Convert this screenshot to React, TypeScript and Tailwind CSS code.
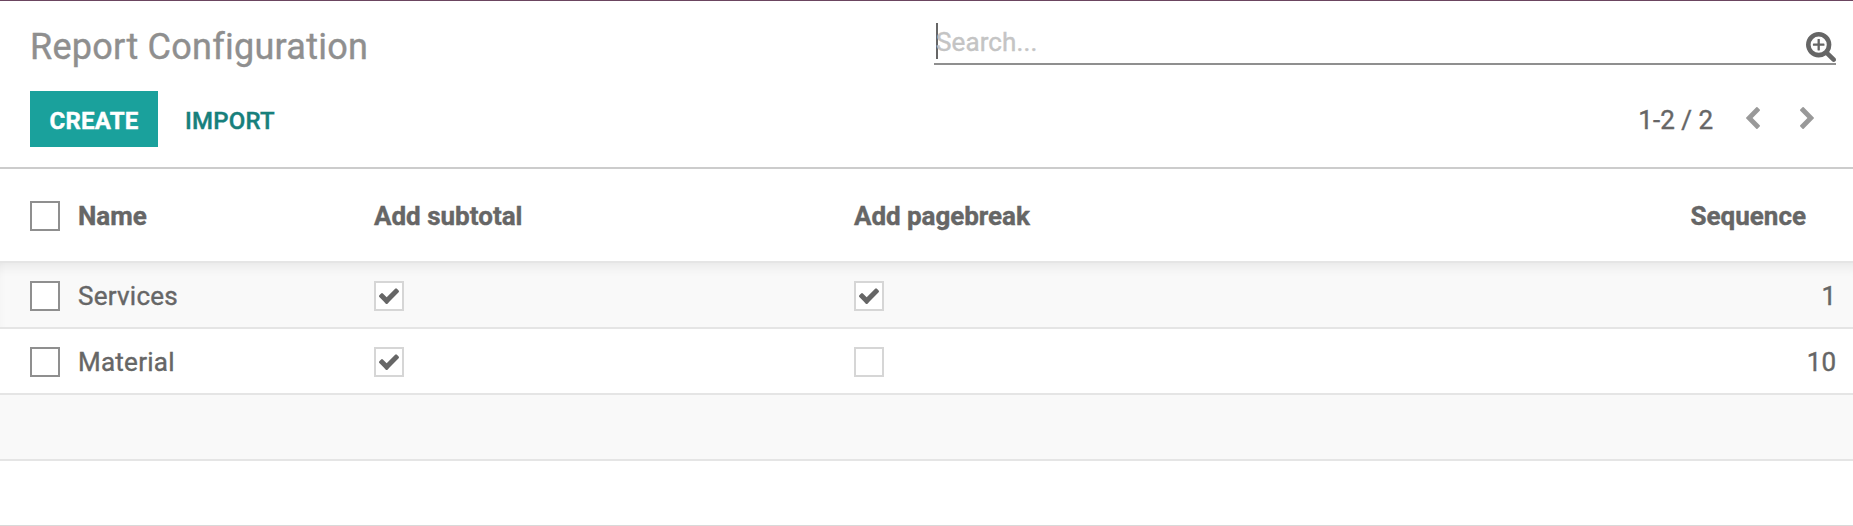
import React from "react";

function CheckGlyph() {
  return (
    <svg width="20" height="16" viewBox="121 314 1550 1208" preserveAspectRatio="none" fill="#666666">
      <path d="M1671 566q0 40-28 68l-724 724-136 136q-28 28-68 28t-68-28l-136-136-362-362q-28-28-28-68t28-68l136-136q28-28 68-28t68 28l294 295 656-657q28-28 68-28t68 28l136 136q28 28 28 68z" />
    </svg>
  );
}

function SearchPlusGlyph() {
  return (
    <svg className="mb-px" width="30" height="30" viewBox="64 128 1664 1664" fill="#666666">
      <path d="M1088 800v64q0 13-9.5 22.5t-22.5 9.5h-224v224q0 13-9.5 22.5t-22.5 9.5h-64q-13 0-22.5-9.5t-9.5-22.5v-224h-224q-13 0-22.5-9.5t-9.5-22.5v-64q0-13 9.5-22.5t22.5-9.5h224v-224q0-13 9.5-22.5t22.5-9.5h64q13 0 22.5 9.5t9.5 22.5v224h224q13 0 22.5 9.5t9.5 22.5zm128 32q0-185-131.5-316.5t-316.5-131.5-316.5 131.5-131.5 316.5 131.5 316.5 316.5 131.5 316.5-131.5 131.5-316.5zm512 832q0 53-37.5 90.5t-90.5 37.5q-54 0-90-38l-343-342q-179 124-399 124-143 0-273.5-55.5t-225-150-150-225-55.5-273.5 55.5-273.5 150-225 225-150 273.5-55.5 273.5 55.5 225 150 150 225 55.5 273.5q0 220-124 399l343 343q37 37 37 90z" />
    </svg>
  );
}

function Selector() {
  return <span className="block size-[30px] border-2 border-[#8f8f8f] bg-white" />;
}

function Flag({ on }: { on: boolean }) {
  return (
    <span className="flex size-[30px] items-center justify-center border-2 border-[#d6d6d6] bg-white">
      {on && <CheckGlyph />}
    </span>
  );
}

const columns = "grid grid-cols-[78px_296px_480px_1fr] items-center pt-[2px]";

const rows = [
  { name: "Services", subtotal: true, pagebreak: true, sequence: 1 },
  { name: "Material", subtotal: true, pagebreak: false, sequence: 10 },
];

export default function App() {
  return (
    <div className="h-[526px] w-[1853px] overflow-hidden border-t border-[#6b4560] bg-white font-['Roboto',sans-serif] text-[26px] text-[#666666] [-webkit-text-stroke-width:0.4px]">
      <header className="flex h-[168px] justify-between border-b-2 border-[#cccccc] pr-[17px] pl-[30px]">
        <div>
          <h1 className="mt-[25px] h-[42px] text-[36px] leading-[42px] tracking-[0.26px] text-[#8f8f8f]">Report Configuration</h1>
          <div className="mt-[23px] flex h-[56px] items-center text-[24px] font-medium tracking-[0.2px]">
            <button className="h-[56px] w-[128px] bg-[#1aa19c] pt-[3px] font-bold text-white">CREATE</button>
            <button className="ml-[27px] pt-[3px] text-[#17807c]">IMPORT</button>
          </div>
        </div>
        <div className="flex w-[902px] flex-col">
          <div className="flex h-[64px] items-end justify-between border-b-2 border-[#8f8f8f] pl-[2px]">
            <div className="mb-[4px] flex h-[36px] items-center border-l-2 border-[#666666]">
              <span className="-ml-[2px] pt-[2px] tracking-[0.1px] text-[#c4c4c4]">Search...</span>
            </div>
            <SearchPlusGlyph />
          </div>
          <div className="mt-[26px] flex h-[56px] items-center justify-end pr-[22px]">
            <span className="pt-[2px]">1-2 / 2</span>
            <svg className="mb-[3px] ml-[33px]" width="14" height="22" viewBox="410 26 1036 1612" fill="#999999">
              <path d="M1427 301l-531 531 531 531q19 19 19 45t-19 45l-166 166q-19 19-45 19t-45-19l-742-742q-19-19-19-45t19-45l742-742q19-19 45-19t45 19l166 166q19 19 19 45t-19 45z" />
            </svg>
            <svg className="mb-[3px] ml-[40px]" width="14" height="22" viewBox="346 26 1036 1612" fill="#999999">
              <path d="M1363 877l-742 742q-19 19-45 19t-45-19l-166-166q-19-19-19-45t19-45l531-531-531-531q-19-19-19-45t19-45l166-166q19-19 45-19t45 19l742 742q19 19 19 45t-19 45z" />
            </svg>
          </div>
        </div>
      </header>
      <main>
        <div className={`${columns} h-[94px] border-b-2 border-[#e5e5e5] pr-[47px] font-bold`}>
          <span className="pl-[30px]"><Selector /></span>
          <span>Name</span>
          <span>Add subtotal</span>
          <div className="flex justify-between">
            <span className="tracking-[-0.05px]">Add pagebreak</span>
            <span>Sequence</span>
          </div>
        </div>
        {rows.map((row, i) => (
          <div
            key={row.name}
            className={`${columns} h-[66px] border-b-2 border-[#e5e5e5] pr-[17px] ${i === 0 ? "bg-[#f9f9f9] shadow-[inset_0_14px_12px_-10px_rgba(0,0,0,0.07),inset_8px_0_8px_-8px_rgba(0,0,0,0.03)]" : "bg-white"}`}
          >
            <span className="pl-[30px]"><Selector /></span>
            <span className="tracking-[0.25px]">{row.name}</span>
            <Flag on={row.subtotal} />
            <div className="flex items-center justify-between">
              <Flag on={row.pagebreak} />
              <span>{row.sequence}</span>
            </div>
          </div>
        ))}
        <div className="h-[66px] border-b-2 border-[#e5e5e5] bg-[#f9f9f9]" />
        <div className="h-[65px] border-b border-[#d9d9d9]" />
      </main>
    </div>
  );
}
